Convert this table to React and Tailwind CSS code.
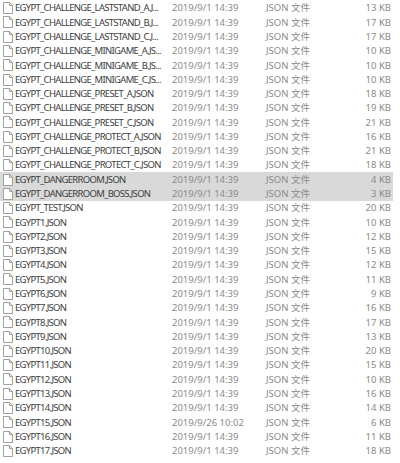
import React from "react";

const rows = [
  ["EGYPT_CHALLENGE_LASTSTAND_A.J...", "2019/9/1 14:39", "13 KB"],
  ["EGYPT_CHALLENGE_LASTSTAND_B.J...", "2019/9/1 14:39", "17 KB"],
  ["EGYPT_CHALLENGE_LASTSTAND_C.J...", "2019/9/1 14:39", "17 KB"],
  ["EGYPT_CHALLENGE_MINIGAME_A.JS...", "2019/9/1 14:39", "10 KB"],
  ["EGYPT_CHALLENGE_MINIGAME_B.JS...", "2019/9/1 14:39", "10 KB"],
  ["EGYPT_CHALLENGE_MINIGAME_C.JS...", "2019/9/1 14:39", "10 KB"],
  ["EGYPT_CHALLENGE_PRESET_A.JSON", "2019/9/1 14:39", "18 KB"],
  ["EGYPT_CHALLENGE_PRESET_B.JSON", "2019/9/1 14:39", "19 KB"],
  ["EGYPT_CHALLENGE_PRESET_C.JSON", "2019/9/1 14:39", "21 KB"],
  ["EGYPT_CHALLENGE_PROTECT_A.JSON", "2019/9/1 14:39", "16 KB"],
  ["EGYPT_CHALLENGE_PROTECT_B.JSON", "2019/9/1 14:39", "21 KB"],
  ["EGYPT_CHALLENGE_PROTECT_C.JSON", "2019/9/1 14:39", "18 KB"],
  ["EGYPT_DANGERROOM.JSON", "2019/9/1 14:39", "4 KB", true],
  ["EGYPT_DANGERROOM_BOSS.JSON", "2019/9/1 14:39", "3 KB", true],
  ["EGYPT_TEST.JSON", "2019/9/1 14:39", "20 KB"],
  ["EGYPT1.JSON", "2019/9/1 14:39", "10 KB"],
  ["EGYPT2.JSON", "2019/9/1 14:39", "12 KB"],
  ["EGYPT3.JSON", "2019/9/1 14:39", "15 KB"],
  ["EGYPT4.JSON", "2019/9/1 14:39", "12 KB"],
  ["EGYPT5.JSON", "2019/9/1 14:39", "11 KB"],
  ["EGYPT6.JSON", "2019/9/1 14:39", "9 KB"],
  ["EGYPT7.JSON", "2019/9/1 14:39", "16 KB"],
  ["EGYPT8.JSON", "2019/9/1 14:39", "17 KB"],
  ["EGYPT9.JSON", "2019/9/1 14:39", "13 KB"],
  ["EGYPT10.JSON", "2019/9/1 14:39", "20 KB"],
  ["EGYPT11.JSON", "2019/9/1 14:39", "15 KB"],
  ["EGYPT12.JSON", "2019/9/1 14:39", "10 KB"],
  ["EGYPT13.JSON", "2019/9/1 14:39", "16 KB"],
  ["EGYPT14.JSON", "2019/9/1 14:39", "14 KB"],
  ["EGYPT15.JSON", "2019/9/26 10:02", "6 KB"],
  ["EGYPT16.JSON", "2019/9/1 14:39", "11 KB"],
  ["EGYPT17.JSON", "2019/9/1 14:39", "18 KB"],
];

function FileIcon() {
  return (
    <svg width="10" height="12" viewBox="0 0 10 12" className="shrink-0">
      <path
        d="M0.5 0.5 H6.5 L9.5 3.5 V11.5 H0.5 Z"
        fill="#ffffff"
        stroke="#a0a0a0"
        strokeWidth="1"
      />
      <path d="M6.5 0.5 V3.5 H9.5" fill="none" stroke="#a0a0a0" strokeWidth="1" />
    </svg>
  );
}

export default function App() {
  return (
    <div
      className="w-[400px] h-[463px] bg-white overflow-hidden pt-[1px] text-[9.5px] leading-none"
      style={{ fontFamily: '"Noto Sans", "Noto Sans CJK SC", sans-serif' }}
    >
      {rows.map(([name, date, size, sel], i) => (
        <div
          key={i}
          className={`flex items-center h-[14.29px] w-[393px] ${sel ? "bg-[#d9d9d9]" : ""}`}
        >
          <div className="w-[14px] pl-[3px] flex items-center">
            <FileIcon />
          </div>
          <div className="w-[158px] pl-[1px] text-[#404040] whitespace-nowrap tracking-[-0.7px]">
            {name}
          </div>
          <div className="w-[94px] text-[#8a8a8a] whitespace-nowrap">{date}</div>
          <div className="w-[80px] text-[#8a8a8a] whitespace-nowrap">JSON 文件</div>
          <div className="w-[45px] text-right text-[#8a8a8a] whitespace-nowrap">{size}</div>
        </div>
      ))}
    </div>
  );
}
